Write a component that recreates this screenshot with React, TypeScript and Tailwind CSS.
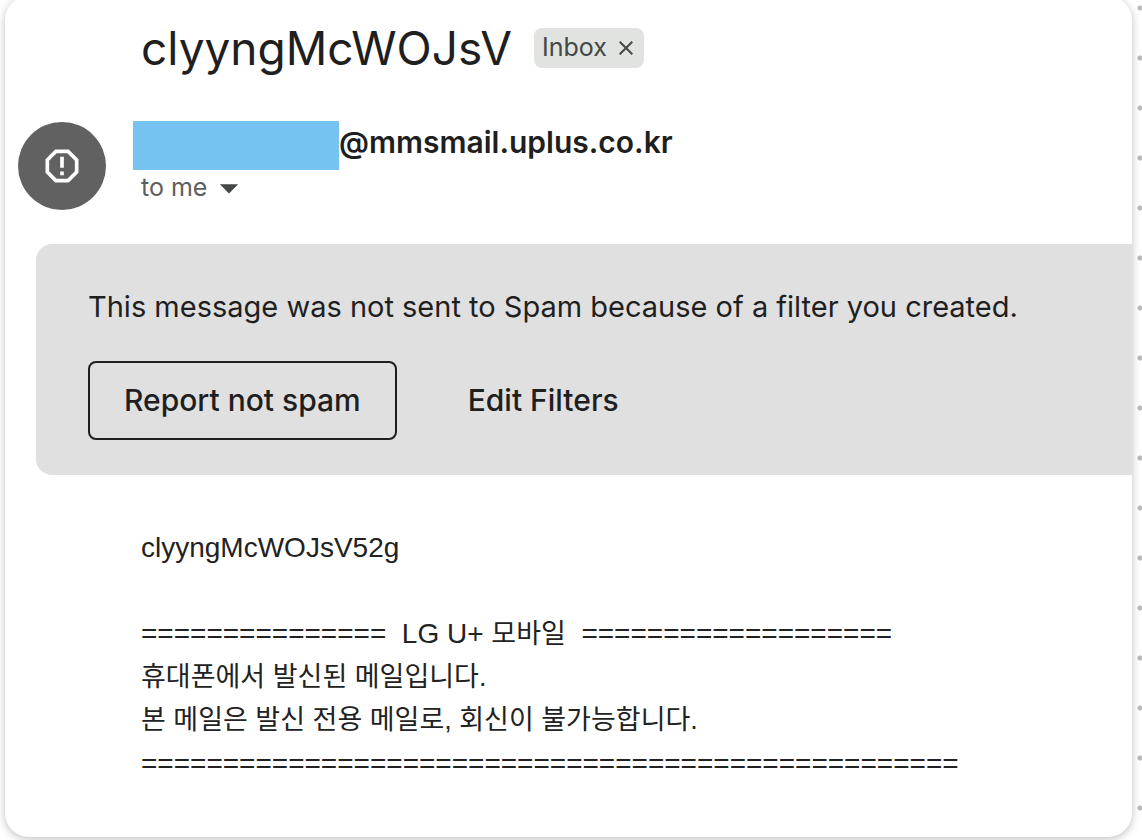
import React from 'react';
import { MdArrowDropDown, MdClose, MdReportGmailerrorred } from 'react-icons/md';

const SubjectLine: React.FC = () => {
  return (
    <div className="flex items-center gap-[22px] pl-34">
      <h1 className="text-[46px] leading-[60px] whitespace-nowrap">clyyngMcWOJsV</h1>
      <div className="flex h-10 items-center gap-[7px] rounded-lg bg-[#e1e3e1] pr-[6px] pl-2 text-[25px] text-[#444746]">
        <span>Inbox</span>
        <button type="button" aria-label="Remove label Inbox">
          <MdClose className="size-6" />
        </button>
      </div>
    </div>
  );
};

const SenderRow: React.FC = () => {
  return (
    <div className="flex items-start pl-[13px]">
      <div className="mt-px flex size-[88px] shrink-0 items-center justify-center rounded-full bg-[#616161] text-white">
        <MdReportGmailerrorred className="size-11" />
      </div>
      <div className="pl-[27px]">
        <div className="flex items-start">
          <span className="h-[49px] w-[206px] bg-[#76c2f1]" />
          <span className="text-[30px] leading-[43px] font-semibold">@mmsmail.uplus.co.kr</span>
        </div>
        <div className="flex h-9 items-center pl-2 text-[25px] text-[#5e5e5e]">
          <span>to me</span>
          <button type="button" aria-label="Show details" className="text-[#444746]">
            <MdArrowDropDown className="size-11" />
          </button>
        </div>
      </div>
    </div>
  );
};

const SpamNotice: React.FC = () => {
  return (
    <div className="ml-[31px] rounded-l-2xl bg-[#e0e0e0] px-13 py-[35px]">
      <p className="text-[29px] leading-14">
        This message was not sent to Spam because of a filter you created.
      </p>
      <div className="mt-[26px] flex text-[30px] font-medium">
        <button type="button" className="h-[79px] rounded-lg border-2 border-[#1f1f1f] px-[34px]">
          Report not spam
        </button>
        <button type="button" className="h-[79px] px-[71px]">
          Edit Filters
        </button>
      </div>
    </div>
  );
};

const MessageBody: React.FC = () => {
  return (
    <div className="pl-34 font-['Liberation_Sans','Noto_Sans_CJK_KR',sans-serif] text-[28px] leading-[43px] text-[#222222]">
      <p>clyyngMcWOJsV52g</p>
      <br />
      <p className="whitespace-pre">
        {'===============  LG U+ '}
        <span className="text-[27px]">모바일</span>
        {'  ==================='}
      </p>
      <p className="text-[27px]">휴대폰에서 발신된 메일입니다.</p>
      <p className="text-[27px]">본 메일은 발신 전용 메일로, 회신이 불가능합니다.</p>
      <p>==================================================</p>
    </div>
  );
};

const App: React.FC = () => {
  return (
    <div className="flex min-h-screen overflow-hidden bg-white bg-[radial-gradient(circle,#bbbbbb_2px,transparent_3px)] bg-size-[50px_50px] bg-position-[right_-23px_top_-17px] pr-[10px] pb-[3px] pl-[5px] font-['Inter',sans-serif] text-[#1f1f1f]">
      <main className="-mt-1 flex-1 overflow-hidden rounded-3xl bg-white pt-[22px] shadow-[0_2px_8px_rgba(0,0,0,0.25)]">
        <SubjectLine />
        <div className="mt-[43px]">
          <SenderRow />
        </div>
        <div className="mt-[34px]">
          <SpamNotice />
        </div>
        <div className="mt-[51px]">
          <MessageBody />
        </div>
      </main>
    </div>
  );
};

export default App;
